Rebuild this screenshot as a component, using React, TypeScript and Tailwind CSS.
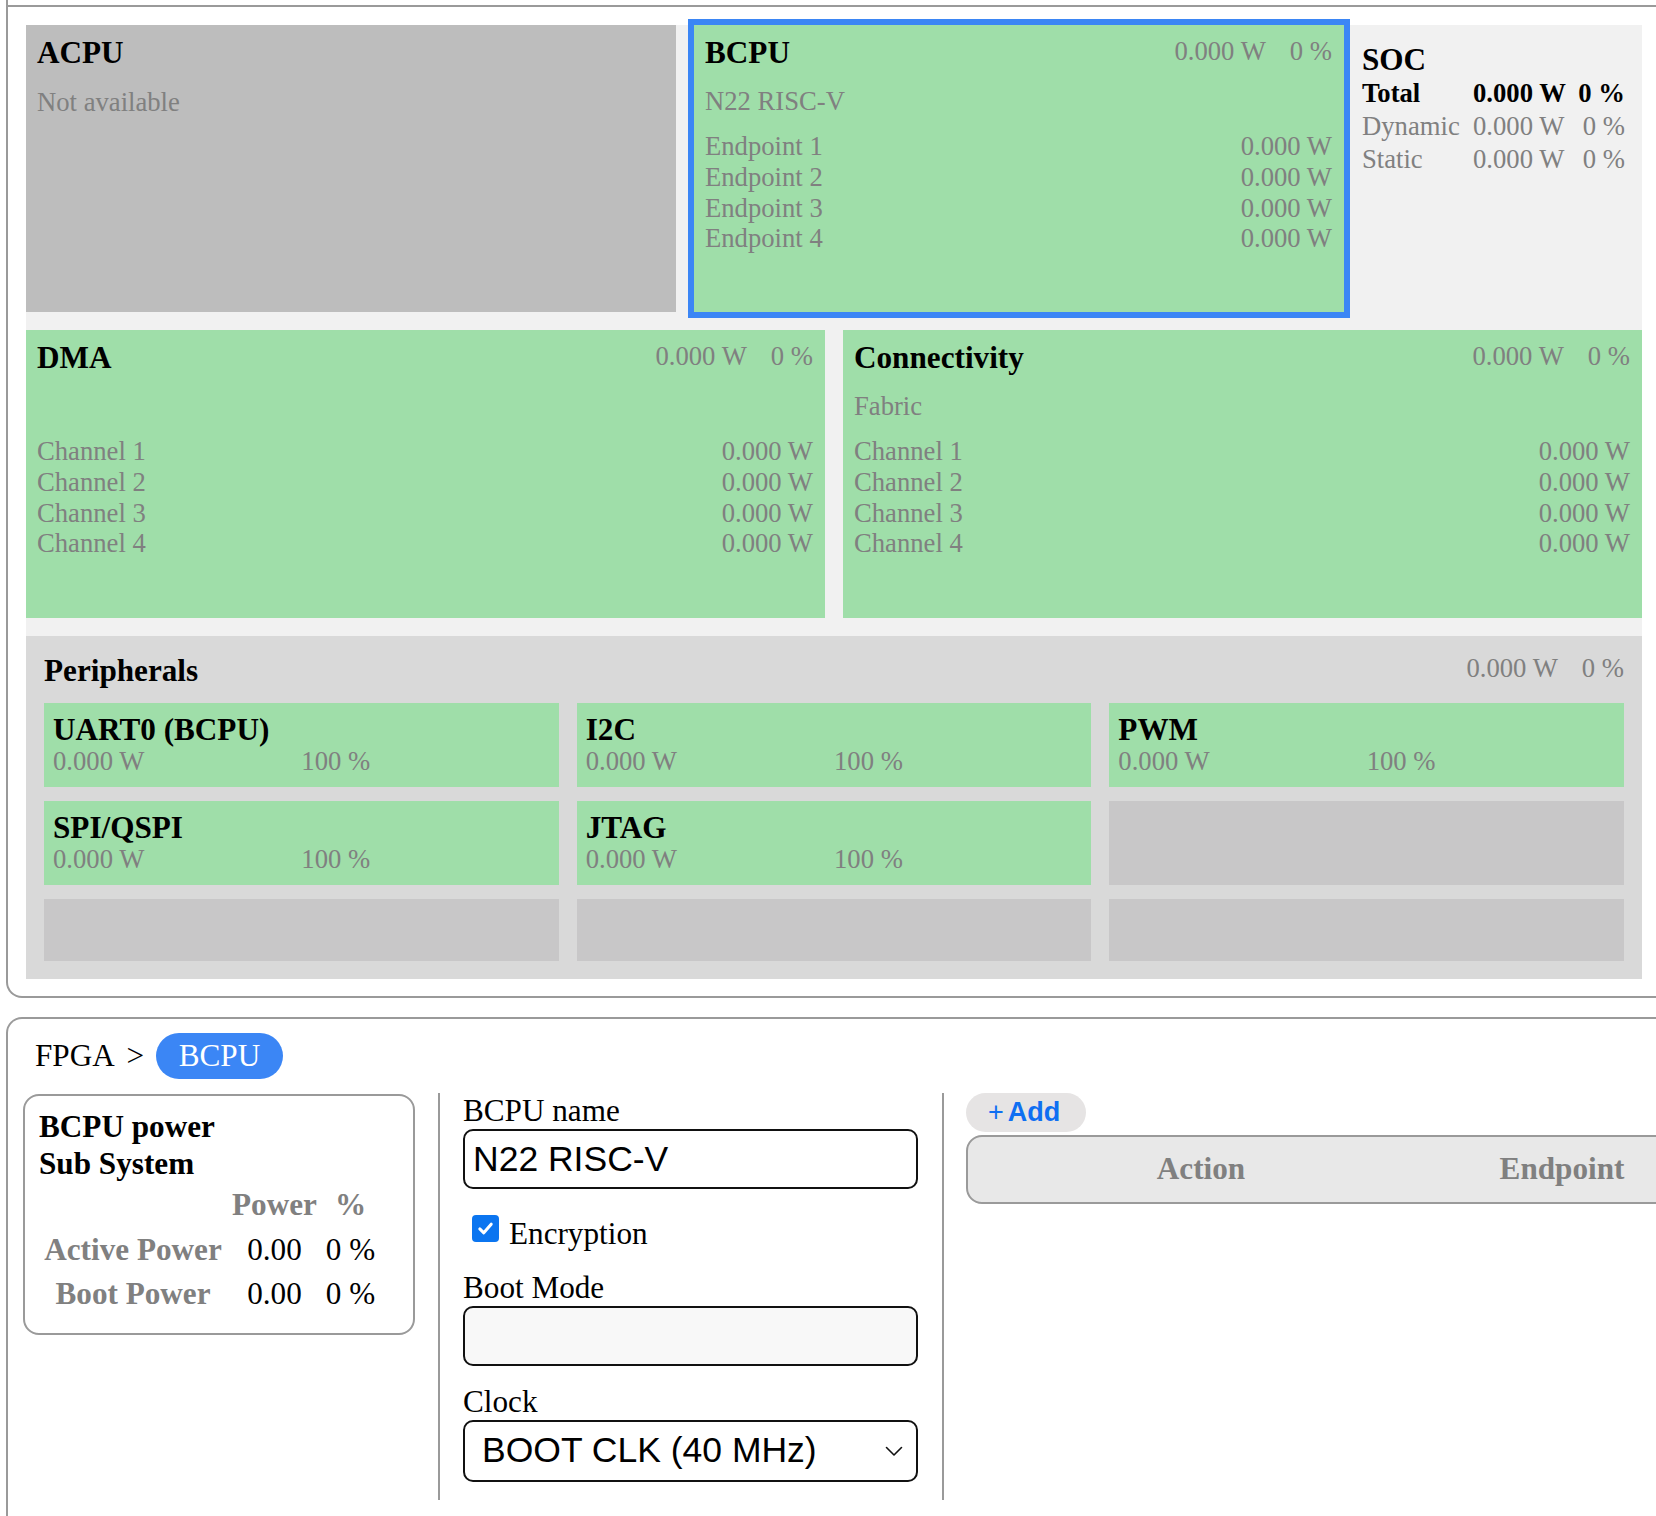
import React from "react";

const serif = "font-['Liberation_Serif','Times_New_Roman',serif]";
const sans = "font-['Liberation_Sans',Arial,sans-serif]";

function TopValues() {
  return (
    <div className="flex gap-[24px] whitespace-nowrap leading-[32px] text-[#808080]">
      <span>0.000 W</span>
      <span>0 %</span>
    </div>
  );
}

function UnitBox({
  title,
  subtitle,
  rows,
  className,
}: {
  title: string;
  subtitle: string;
  rows: string[];
  className: string;
}) {
  return (
    <div className={className}>
      <div className="flex items-start justify-between">
        <div className="text-[31.2px] font-bold leading-[36px] text-black">{title}</div>
        <TopValues />
      </div>
      <div className="mt-[15px] h-[31px] leading-[31px] text-[#808080]">{subtitle || "\u00a0"}</div>
      <div className="mt-[14px]">
        {rows.map((r) => (
          <div key={r} className="flex justify-between leading-[30.75px] text-[#808080]">
            <span>{r}</span>
            <span>0.000 W</span>
          </div>
        ))}
      </div>
    </div>
  );
}

function Periph({ name }: { name?: string }) {
  if (!name) return <div className="bg-[#c8c7c8]" />;
  return (
    <div className="h-[84px] bg-[#9fdea9] px-[9px] pt-[10px]">
      <div className="text-[31.2px] font-bold leading-[34px] text-black whitespace-nowrap">{name}</div>
      <div className="grid grid-cols-2 leading-[28px] text-[#808080]">
        <span>0.000 W</span>
        <span>100 %</span>
      </div>
    </div>
  );
}

function SocRow({ label, bold }: { label: string; bold?: boolean }) {
  const color = bold ? "font-bold text-black" : "text-[#808080]";
  return (
    <div className={`flex leading-[33px] whitespace-nowrap ${color}`}>
      <span className="w-[111px]">{label}</span>
      <span className="w-[100px]">0.000 W</span>
      <span className="w-[52px] text-right">0 %</span>
    </div>
  );
}

export default function App() {
  const endpoints = ["Endpoint 1", "Endpoint 2", "Endpoint 3", "Endpoint 4"];
  const channels = ["Channel 1", "Channel 2", "Channel 3", "Channel 4"];
  return (
    <div className={`w-[1656px] h-[1516px] overflow-hidden bg-white text-[26.67px] text-black ${serif}`}>
      {/* Top panel */}
      <div className="ml-[6px] w-[1700px] border-l-2 border-r-2 border-b-2 border-[#9a9a9a] rounded-b-[16px] pb-[17px]">
        <div className="h-[7px] border-b-2 border-[#9a9a9a]" />
        <div className="pl-[18px] pt-[18px]">
          <div className="w-[1616px] bg-[#f1f1f1] flex flex-col gap-[18px]">
            {/* Row 1 */}
            <div className="flex gap-[18px] h-[287px]">
              <div className="w-[650px] shrink-0 bg-[#bdbdbd] pl-[11px] pr-[12px] pt-[10px]">
                <div className="text-[31.2px] font-bold leading-[36px]">ACPU</div>
                <div className="mt-[16px] leading-[31px] text-[#808080]">Not available</div>
              </div>
              <UnitBox
                title="BCPU"
                subtitle="N22 RISC-V"
                rows={endpoints}
                className="w-[650px] shrink-0 bg-[#9fdea9] pl-[11px] pr-[12px] pt-[10px] shadow-[0_0_0_6px_#3b86f5]"
              />
              <div className="w-[280px] shrink-0 pt-[18px]">
                <div className="text-[31.2px] font-bold leading-[34px]">SOC</div>
                <SocRow label="Total" bold />
                <SocRow label="Dynamic" />
                <SocRow label="Static" />
              </div>
            </div>
            {/* Row 2 */}
            <div className="flex gap-[18px] h-[288px]">
              <UnitBox
                title="DMA"
                subtitle=""
                rows={channels}
                className="w-[799px] shrink-0 bg-[#9fdea9] pl-[11px] pr-[12px] pt-[10px]"
              />
              <UnitBox
                title="Connectivity"
                subtitle="Fabric"
                rows={channels}
                className="w-[799px] shrink-0 bg-[#9fdea9] pl-[11px] pr-[12px] pt-[10px]"
              />
            </div>
            {/* Peripherals */}
            <div className="h-[343px] bg-[#d9d9d9] px-[18px] pt-[18px]">
              <div className="flex items-start justify-between h-[34px] mb-[15px]">
                <div className="text-[31.2px] font-bold leading-[34px]">Peripherals</div>
                <div className="flex gap-[24px] leading-[28px] text-[#808080]">
                  <span>0.000 W</span>
                  <span>0 %</span>
                </div>
              </div>
              <div className="grid grid-cols-3 grid-rows-[84px_84px_62px] gap-x-[18px] gap-y-[14px]">
                <Periph name="UART0 (BCPU)" />
                <Periph name="I2C" />
                <Periph name="PWM" />
                <Periph name="SPI/QSPI" />
                <Periph name="JTAG" />
                <Periph />
                <Periph />
                <Periph />
                <Periph />
              </div>
            </div>
          </div>
        </div>
      </div>

      {/* Bottom panel */}
      <div className="mt-[19px] ml-[6px] w-[1700px] h-[520px] border-l-2 border-r-2 border-t-2 border-[#9a9a9a] rounded-t-[16px]">
        {/* Breadcrumb */}
        <div className="pt-[14px] pl-[27px] flex items-center h-[60px] text-[31.2px]">
          <span>FPGA</span>
          <span className="ml-[11.7px]">&gt;</span>
          <span className="ml-[11.7px] h-[46px] px-[23px] rounded-full bg-[#3b86f5] text-white flex items-center">
            BCPU
          </span>
        </div>

        <div className="mt-[14px] flex">
          {/* Left card */}
          <div className="pl-[15px] shrink-0">
            <div className="mt-[1px] w-[392px] h-[241px] border-2 border-[#9a9a9a] rounded-[16px] pl-[14px] pt-[13px]">
              <div className="text-[31.2px] font-bold leading-[36.6px]">
                <div>BCPU power</div>
                <div>Sub System</div>
              </div>
              <div className="mt-[1px] grid grid-cols-[188px_95px_57px] text-[31.2px] leading-[44.5px] text-center whitespace-nowrap">
                <span />
                <span className="font-bold text-[#808080]">Power</span>
                <span className="font-bold text-[#808080]">%</span>
                <span className="font-bold text-[#808080]">Active Power</span>
                <span>0.00</span>
                <span>0 %</span>
                <span className="font-bold text-[#808080]">Boot Power</span>
                <span>0.00</span>
                <span>0 %</span>
              </div>
            </div>
          </div>

          {/* Divider */}
          <div className="ml-[23px] shrink-0 w-[2px] h-[407px] bg-[#9a9a9a]" />

          {/* Middle form */}
          <div className="w-[502px] shrink-0 pl-[23px] pr-[24px] text-[31.2px]">
            <div className="leading-[36px]">BCPU name</div>
            <input
              readOnly
              value="N22 RISC-V"
              className={`block w-[455px] h-[60px] border-2 border-[#111] rounded-[10px] px-[8px] text-[35.5px] text-black bg-white outline-none ${sans}`}
            />
            <div className="mt-[26px] flex items-start">
              <div className="ml-[9px] w-[27px] h-[27px] rounded-[4px] bg-[#0b75f0] flex items-center justify-center">
                <svg width="19" height="19" viewBox="0 0 20 20" fill="none">
                  <path d="M4 10.5 L8.2 14.5 L16 5.5" stroke="white" strokeWidth="3.2" strokeLinecap="round" strokeLinejoin="round" />
                </svg>
              </div>
              <span className="ml-[10px] mt-[1px] leading-[36px]">Encryption</span>
            </div>
            <div className="mt-[18px] leading-[36px]">Boot Mode</div>
            <div className="w-[455px] h-[60px] border-2 border-[#111] rounded-[10px] bg-[#f8f8f8]" />
            <div className="mt-[17px] leading-[37px]">Clock</div>
            <div
              className={`w-[455px] h-[62px] border-2 border-[#111] rounded-[10px] bg-white flex items-center justify-between pl-[17px] pr-[13px] text-[35.5px] ${sans}`}
            >
              <span>BOOT CLK (40 MHz)</span>
              <svg width="18" height="11" viewBox="0 0 18 11" fill="none">
                <path d="M1.5 1.5 L9 9 L16.5 1.5" stroke="#111" strokeWidth="1.6" strokeLinecap="round" strokeLinejoin="round" />
              </svg>
            </div>
          </div>

          {/* Divider */}
          <div className="shrink-0 w-[2px] h-[407px] bg-[#9a9a9a]" />

          {/* Right */}
          <div className="pl-[22px] shrink-0">
            <div
              className={`w-[120px] h-[39px] rounded-full bg-[#e6e4e4] flex items-center pl-[22px] text-[27px] text-[#0f6ff2] ${sans}`}
            >
              <span className="font-normal">+</span>
              <span className="ml-[4px] font-bold">Add</span>
            </div>
            <div className="mt-[3px] w-[1000px] h-[69px] border-2 border-[#9a9a9a] rounded-[16px] bg-[#e8e8e8] flex items-center text-[31.2px] font-bold text-[#808080]">
              <div className="w-[466px] text-center">Action</div>
              <div className="w-[256px] text-center">Endpoint</div>
            </div>
          </div>
        </div>
      </div>
    </div>
  );
}
